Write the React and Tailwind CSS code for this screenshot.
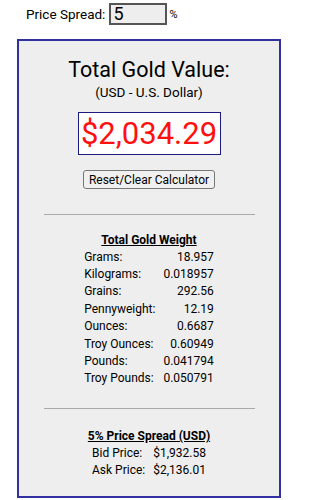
const weights = [
  ['Grams:', '18.957'],
  ['Kilograms:', '0.018957'],
  ['Grains:', '292.56'],
  ['Pennyweight:', '12.19'],
  ['Ounces:', '0.6687'],
  ['Troy Ounces:', '0.60949'],
  ['Pounds:', '0.041794'],
  ['Troy Pounds:', '0.050791'],
]

const App = () => {
  return (
    <div className="w-[306px] h-[500px] bg-white text-black overflow-hidden" style={{ fontFamily: 'Roboto, "Noto Sans", sans-serif' }}>
      <div className="flex items-center h-[26px] pl-[26px] pt-[2px]">
        <span className="text-[13.5px] mr-[4px]">Price Spread:</span>
        <div className="w-[58px] h-[22px] border-2 border-[#555] bg-[#eeeeee] text-[18px] leading-[18px] pl-[2px] flex items-center">5</div>
        <span className="text-[11px] ml-[2px] mt-[2px]">%</span>
      </div>

      <div className="ml-[17px] mt-[13px] w-[264px] h-[459px] border-2 border-[#3030a0] bg-[#eeeeee] flex flex-col items-center">
        <h1 className="text-[21.5px] leading-[26px] mt-[16px]">Total Gold Value:</h1>
        <p className="text-[13.5px] leading-[16px] mt-[1px]">(USD - U.S. Dollar)</p>
        <div className="mt-[12px] w-[143px] h-[43px] border border-[#1a1a80] bg-white text-[#ff1010] text-[31px] leading-[41px] text-center">$2,034.29</div>
        <button className="mt-[15px] h-[19px] px-[5px] border border-[#777] rounded-[3px] bg-[#f0f0f0] text-[12px] leading-[16px]">Reset/Clear Calculator</button>
        <hr className="w-[211px] mt-[25px] border-t border-[#aaa]" />

        <p className="mt-[17px] text-[12px] leading-[16px] font-bold underline">Total Gold Weight</p>
        <table className="mt-[0px] text-[12px]">
          <tbody>
            {weights.map(([label, value]) => (
              <tr key={label} className="h-[17.4px]">
                <td className="pr-[8px] leading-[16px]">{label}</td>
                <td className="text-right leading-[16px]">{value}</td>
              </tr>
            ))}
          </tbody>
        </table>

        <hr className="w-[211px] mt-[21px] border-t border-[#aaa]" />
        <p className="mt-[19px] text-[12px] leading-[16px] font-bold underline">5% Price Spread (USD)</p>
        <table className="text-[12px] mt-[0px]">
          <tbody>
            <tr className="h-[17.4px]">
              <td className="pr-[8px] leading-[16px]">Bid Price:</td>
              <td className="leading-[16px]">$1,932.58</td>
            </tr>
            <tr className="h-[17.4px]">
              <td className="pr-[8px] leading-[16px]">Ask Price:</td>
              <td className="leading-[16px]">$2,136.01</td>
            </tr>
          </tbody>
        </table>
      </div>
    </div>
  )
}

export default App
